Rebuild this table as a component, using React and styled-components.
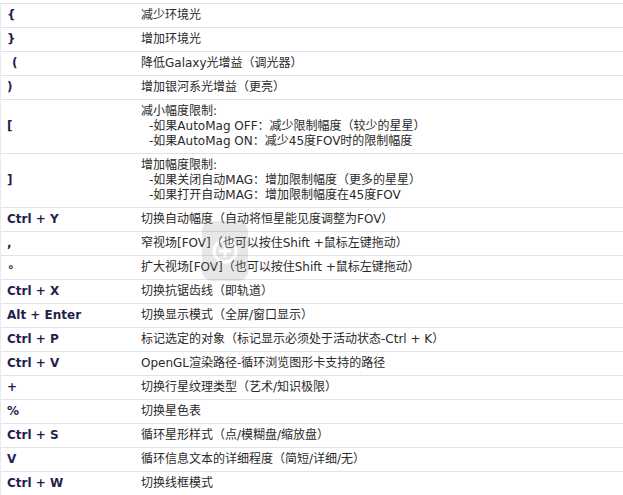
import React from "react";
import styled, { createGlobalStyle } from "styled-components";

const Global = createGlobalStyle`
  html, body { margin: 0; padding: 0; background: #ffffff; }
  body { font-family: "DejaVu Sans", "Noto Sans CJK SC", sans-serif; }
`;

const Page = styled.div`
  position: relative;
  width: 623px;
  height: 495px;
  overflow: hidden;
  padding-top: 3px;
  box-sizing: border-box;
  background: #ffffff;
`;

const Table = styled.div`
  display: grid;
  grid-template-columns: 140px 1fr;
  border-top: 1px solid #dfe3e8;
  border-left: 1px solid #e6e9ee;
`;

const Row = styled.div`
  display: contents;
`;

const Cell = styled.div`
  border-bottom: 1px solid #dfe3e8;
  padding: 4px 0;
  line-height: 15px;
  font-size: 12px;
  display: flex;
  flex-direction: column;
  justify-content: center;
  white-space: nowrap;
  background: #ffffff;
`;

const Key = styled(Cell)`
  padding-left: ${(p) => (p.$indent ? 11 : 6)}px;
  font-weight: bold;
  color: #1f1f4d;
  font-family: "DejaVu Sans", "Noto Sans CJK SC", sans-serif;
`;

const Desc = styled(Cell)`
  color: #2a2a2a;
  font-family: "DejaVu Sans", "Noto Sans CJK SC", sans-serif;
`;

const SubLine = styled.span`
  padding-left: 8px;
`;

const Watermark = styled.div`
  position: absolute;
  left: 202px;
  top: 221px;
  width: 46px;
  height: 60px;
  border-radius: 10px;
  background: #8a8a8a;
  opacity: 0.2;
  display: flex;
  align-items: center;
  justify-content: center;
  pointer-events: none;
`;

const rows = [
  { k: "{", d: ["减少环境光"] },
  { k: "}", d: ["增加环境光"] },
  { k: "(", d: ["降低Galaxy光增益（调光器）"], indent: true },
  { k: ")", d: ["增加银河系光增益（更亮）"] },
  {
    k: "[",
    d: [
      "减小幅度限制:",
      "-如果AutoMag OFF：减少限制幅度（较少的星星）",
      "-如果AutoMag ON：减少45度FOV时的限制幅度",
    ],
  },
  {
    k: "]",
    d: [
      "增加幅度限制:",
      "-如果关闭自动MAG：增加限制幅度（更多的星星）",
      "-如果打开自动MAG：增加限制幅度在45度FOV",
    ],
  },
  { k: "Ctrl + Y", d: ["切换自动幅度（自动将恒星能见度调整为FOV）"] },
  { k: ",", d: ["窄视场[FOV]（也可以按住Shift +鼠标左键拖动）"] },
  { k: "∘", d: ["扩大视场[FOV]（也可以按住Shift +鼠标左键拖动）"] },
  { k: "Ctrl + X", d: ["切换抗锯齿线（即轨道）"] },
  { k: "Alt + Enter", d: ["切换显示模式（全屏/窗口显示）"] },
  { k: "Ctrl + P", d: ["标记选定的对象（标记显示必须处于活动状态-Ctrl + K）"] },
  { k: "Ctrl + V", d: ["OpenGL渲染路径-循环浏览图形卡支持的路径"] },
  { k: "+", d: ["切换行星纹理类型（艺术/知识极限）"] },
  { k: "%", d: ["切换星色表"] },
  { k: "Ctrl + S", d: ["循环星形样式（点/模糊盘/缩放盘）"] },
  { k: "V", d: ["循环信息文本的详细程度（简短/详细/无）"] },
  { k: "Ctrl + W", d: ["切换线框模式"] },
];

export default function App() {
  return (
    <>
      <Global />
      <Page>
        <Table>
          {rows.map((r, i) => (
            <Row key={i}>
              <Key $indent={r.indent}>{r.k}</Key>
              <Desc>
                {r.d.map((line, j) =>
                  j === 0 ? (
                    <span key={j}>{line}</span>
                  ) : (
                    <SubLine key={j}>{line}</SubLine>
                  )
                )}
              </Desc>
            </Row>
          ))}
        </Table>
        <Watermark>
          <svg width="30" height="30" viewBox="0 0 30 30">
            <circle cx="15" cy="15" r="11" fill="none" stroke="#fff" strokeWidth="3" />
            <path d="M9 15 h12 M15 9 v12" stroke="#fff" strokeWidth="3" />
          </svg>
        </Watermark>
      </Page>
    </>
  );
}
